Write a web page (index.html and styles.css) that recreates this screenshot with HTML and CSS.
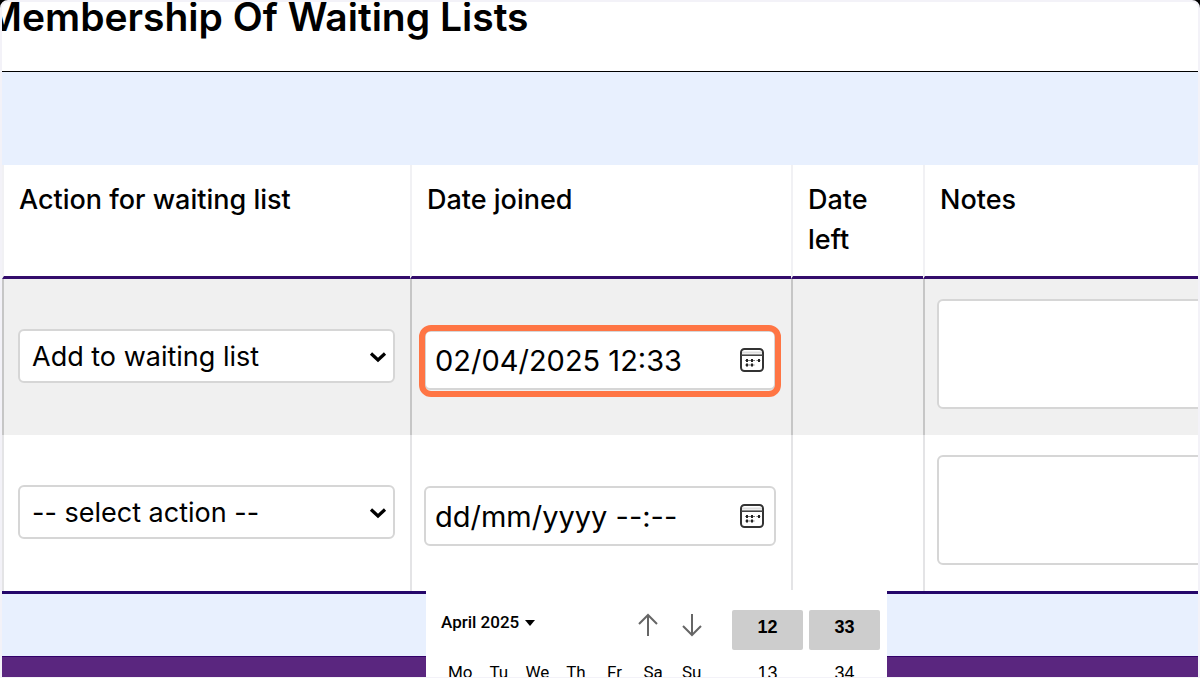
FILE: index.html
```html
<!DOCTYPE html>
<html lang="en-GB">
<head>
<meta charset="utf-8">
<meta name="viewport" content="width=device-width, initial-scale=1">
<title>Membership Of Waiting Lists</title>
<link rel="stylesheet" href="styles.css">
</head>
<body>
<svg width="0" height="0" class="symbols" aria-hidden="true">
  <symbol id="chevron" viewBox="0 0 18 12"><path d="M2 2.500 9 9l7-6.500" fill="none" stroke="#000" stroke-width="3.200"/></symbol>
  <symbol id="calendar" viewBox="0 0 26 26">
    <rect x="2" y="2" width="22" height="22" rx="3.500" fill="#fff" stroke="#333" stroke-width="2"/>
    <path d="M3 5.500h20" stroke="#ddd" stroke-width="2"/>
    <path d="M2 8.200h22" stroke="#444" stroke-width="1.600"/>
    <path d="M6 13.500h10M17.500 13.500h4M6 18h9.500" stroke="#777" stroke-width="1"/>
    <path d="M8 12v3M13 12v3M20 12v3M8 16.500v3M13 16.500v3" stroke="#222" stroke-width="2"/>
  </symbol>
</svg>
<div class="page">
  <header class="page-header"><h1 class="page-title">Membership Of Waiting Lists</h1></header>
  <main class="content">
    <table class="lists">
      <colgroup><col class="col-action"><col class="col-joined"><col class="col-left"><col></colgroup>
      <thead>
        <tr><th scope="col">Action for waiting list</th><th scope="col">Date joined</th><th scope="col">Date left</th><th scope="col">Notes</th></tr>
      </thead>
      <tbody>
        <tr class="row-shaded">
          <td>
            <div class="select-wrap">
              <select class="control select" aria-label="Action for waiting list, row 1"><option>Add to waiting list</option><option>-- select action --</option></select>
              <svg class="chevron" aria-hidden="true"><use href="#chevron"/></svg>
            </div>
          </td>
          <td class="cell-date">
            <div class="date-field highlighted">
              <input class="control date-input" type="text" value="02/04/2025 12:33" aria-label="Date joined, row 1">
              <button class="calendar-button" type="button" aria-label="Open calendar"><svg class="calendar-icon"><use href="#calendar"/></svg></button>
            </div>
          </td>
          <td></td>
          <td class="cell-notes"><textarea class="control notes" aria-label="Notes, row 1"></textarea></td>
        </tr>
        <tr>
          <td>
            <div class="select-wrap">
              <select class="control select" aria-label="Action for waiting list, row 2"><option>-- select action --</option><option>Add to waiting list</option></select>
              <svg class="chevron" aria-hidden="true"><use href="#chevron"/></svg>
            </div>
          </td>
          <td class="cell-date">
            <div class="date-field">
              <input class="control date-input" type="text" value="dd/mm/yyyy --:--" aria-label="Date joined, row 2">
              <button class="calendar-button" type="button" aria-label="Open calendar"><svg class="calendar-icon"><use href="#calendar"/></svg></button>
              <div class="picker">
                <div class="picker-month">
                  <div class="picker-bar">
                    <button class="month-button" type="button">April 2025 <svg class="caret" viewBox="0 0 10 6" aria-hidden="true"><path d="M0 0h10L5 6z"/></svg></button>
                    <div class="picker-arrows">
                      <button class="arrow-button" type="button" aria-label="Previous month"><svg viewBox="0 0 22 24"><path d="M11 23V2M2 11l9-9 9 9"/></svg></button>
                      <button class="arrow-button" type="button" aria-label="Next month"><svg viewBox="0 0 22 24"><path d="M11 1v21M2 13l9 9 9-9"/></svg></button>
                    </div>
                  </div>
                  <table class="days"><thead><tr><th>Mo</th><th>Tu</th><th>We</th><th>Th</th><th>Fr</th><th>Sa</th><th>Su</th></tr></thead></table>
                </div>
                <div class="picker-time">
                  <button class="time time-selected" type="button">12</button>
                  <button class="time time-selected" type="button">33</button>
                  <button class="time" type="button">13</button>
                  <button class="time" type="button">34</button>
                </div>
              </div>
            </div>
          </td>
          <td></td>
          <td class="cell-notes"><textarea class="control notes" aria-label="Notes, row 2"></textarea></td>
        </tr>
      </tbody>
    </table>
  </main>
  <footer class="page-footer"></footer>
</div>
</body>
</html>
```
FILE: styles.css
```css
* { box-sizing: border-box; }

body {
  margin: 0;
  background: #000;
  color: #000;
  font-family: Inter, "Liberation Sans", sans-serif;
  font-size: 27px;
}

button { padding: 0; border: 0; background: none; font: inherit; color: inherit; }

.symbols { position: absolute; }

.page {
  display: flex;
  flex-direction: column;
  height: 100vh;
  border: 2px solid #f3f2f8;
  border-bottom-width: 1px;
  border-radius: 8px 8px 0 0;
  background: #fff;
  overflow: hidden;
}

.page-header {
  flex: none;
  height: 70px;
  border-bottom: 1px solid #000;
}

.page-title {
  margin: -5px 0 0 -16px;
  font-size: 39px;
  line-height: 40px;
  font-weight: 600;
  white-space: nowrap;
}

.content {
  flex: none;
  padding: 93px 0 62px;
  background: #e8f0fe;
}

.lists {
  width: 100%;
  table-layout: fixed;
  border-collapse: separate;
  border-spacing: 0;
  border-bottom: 3px solid #24066a;
  background: #fff;
}

.col-action { width: 408px; }
.col-joined { width: 381px; }
.col-left { width: 132px; }

.lists > thead th {
  height: 114px;
  padding: 15px;
  border-left: 2px solid #f1f1f4;
  border-bottom: 3px solid #330c6b;
  font-weight: 500;
  line-height: 40px;
  text-align: left;
  vertical-align: top;
}

.lists > tbody > tr > td {
  height: 156px;
  padding: 0 15px 2px 14px;
  border-left: 2px solid #e4e4e6;
}

.lists > tbody > .row-shaded > td {
  border-left-color: #c6c6c6;
  background: #f0f0f0;
}

.lists > tbody > tr > .cell-date { padding: 6px 15px 0 12px; }
.lists > tbody > tr > .cell-notes { padding: 20px 0 0 12px; vertical-align: top; }

.control {
  display: block;
  width: 100%;
  margin: 0;
  border: 2px solid #d6d6d6;
  border-radius: 6px;
  background: #fff;
  color: #000;
  font: inherit;
}

.select-wrap, .date-field { position: relative; }

.select {
  height: 54px;
  padding: 0 44px 0 12px;
  appearance: none;
}

.chevron {
  position: absolute;
  top: 22px;
  right: 8px;
  width: 18px;
  height: 12px;
  pointer-events: none;
}

.date-input { height: 60px; padding: 0 56px 0 9px; font-size: 29px; }

.highlighted::after {
  content: "";
  position: absolute;
  inset: -5px -5px -7px;
  border: 6px solid #ff7544;
  border-radius: 12px;
  pointer-events: none;
}

.calendar-button {
  position: absolute;
  top: 17px;
  right: 11px;
  width: 26px;
  height: 26px;
}

.calendar-icon { display: block; width: 26px; height: 26px; }

.notes {
  width: calc(100% + 16px);
  height: 110px;
  resize: none;
}

.picker {
  position: absolute;
  top: calc(100% + 44px);
  left: 2px;
  z-index: 1;
  display: flex;
  gap: 21px;
  width: 461px;
  padding: 20px 7px 0 15px;
  background: #fff;
  font-family: Roboto, "Liberation Sans", sans-serif;
  font-size: 17px;
}

.picker-month { flex: 1; }

.picker-bar {
  display: flex;
  justify-content: space-between;
  padding-right: 8px;
}

.month-button {
  height: 24px;
  font-weight: 500;
  white-space: nowrap;
}

.caret { width: 10px; height: 6px; margin: 0 0 2px 2px; }

.picker-arrows { display: flex; gap: 22px; padding-top: 3px; }
.arrow-button { width: 22px; height: 24px; }
.arrow-button svg { display: block; fill: none; stroke: #666; stroke-width: 2; }

.days {
  width: 100%;
  margin-top: 25px;
  table-layout: fixed;
  border-spacing: 0;
}

.days th { padding: 0; font-weight: 400; line-height: 20px; }

.picker-time {
  display: grid;
  grid-template-columns: 71px 71px;
  grid-auto-rows: 40px;
  gap: 6px;
}

.time {
  padding-bottom: 5px;
  border-radius: 2px;
  font-family: "Liberation Sans", sans-serif;
  font-size: 18px;
}

.time-selected { background: #cdcdcd; font-weight: 700; }

.page-footer {
  flex: 1;
  border-top: 1px solid #32006a;
  background: #5a267f;
}
```
